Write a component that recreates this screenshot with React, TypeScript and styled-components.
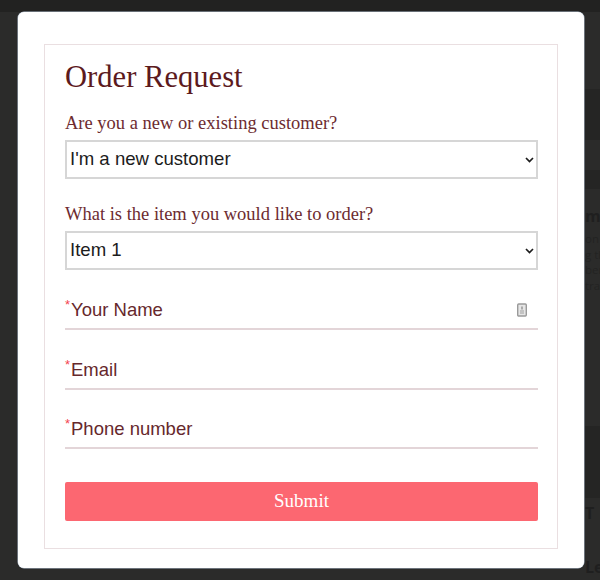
import React from 'react';
import styled, { createGlobalStyle } from 'styled-components';

const GlobalStyle = createGlobalStyle`
  html, body {
    margin: 0;
    padding: 0;
    height: 100%;
    background: #2b2b2a;
    overflow: hidden;
  }
`;

const Backdrop = styled.div`
  position: relative;
  width: 600px;
  height: 580px;
  overflow: hidden;
  background: #2b2b2a;
`;

const TopStrip = styled.div`
  height: 12px;
  background: #222221;
`;

// page content that shows through the overlay, right of the modal
const BehindColumn = styled.div`
  box-sizing: border-box;
  height: 561px;
  padding-left: 585px;
  white-space: nowrap;
  font-family: 'Open Sans', 'Liberation Sans', Arial, sans-serif;
`;

const BehindPicture = styled.div<{ $top: number; $height: number }>`
  margin-top: ${({ $top }) => $top}px;
  height: ${({ $height }) => $height}px;
  background: #252524;
`;

const BehindHeading = styled.div<{ $top: number }>`
  margin-top: ${({ $top }) => $top}px;
  font-size: 16px;
  font-weight: 700;
  line-height: 20px;
  color: #1f1f1f;
`;

const BehindBody = styled.div`
  margin-top: 5px;
  font-size: 11.5px;
  line-height: 15.5px;
  color: #232322;
`;

const BehindCaptions = styled.div`
  display: flex;
  gap: 163px;
  padding-left: 60px;
  font-family: 'Liberation Sans', Arial, sans-serif;
  font-size: 13px;
  font-weight: 700;
  color: #202020;
`;

const Modal = styled.div`
  position: absolute;
  top: 12px;
  left: 18px;
  box-sizing: border-box;
  width: 566px;
  height: 556px;
  padding: 32px 26px 19px;
  background: #fff;
  border-radius: 6px;
  box-shadow: 0 0 0 0.5px #aebccb;
`;

const Form = styled.form`
  box-sizing: border-box;
  height: 505px;
  padding: 14px 19px 0 20px;
  border: 1px solid #eadfe1;
  font-family: 'Liberation Serif', 'Times New Roman', serif;
`;

const Title = styled.h1`
  margin: 0 0 17px;
  font-size: 30.6px;
  font-weight: 400;
  line-height: 36px;
  color: #5c1a1d;
`;

const SelectGroup = styled.div`
  margin-bottom: 24px;

  & + & {
    margin-bottom: 19px;
  }
`;

const SelectLabel = styled.label`
  display: block;
  margin-bottom: 6px;
  font-size: 18.5px;
  line-height: 22px;
  color: #6d2b30;
`;

const SelectWrap = styled.div`
  position: relative;
`;

const Select = styled.select`
  display: block;
  box-sizing: border-box;
  width: 100%;
  height: 39px;
  padding: 0 24px 2px 3px;
  border: 2px solid #d6d6d6;
  border-radius: 0;
  appearance: none;
  background: #fff;
  font-family: 'Liberation Sans', Arial, sans-serif;
  font-size: 18.6px;
  color: #1c1c1c;
  outline: none;
`;

const Chevron = styled.svg`
  position: absolute;
  top: 17px;
  right: 4px;
  width: 9px;
  height: 6px;
  pointer-events: none;
`;

const Field = styled.div`
  display: flex;
  align-items: center;
  box-sizing: border-box;
  height: 41px;
  margin-bottom: 18.5px;
  padding-top: 3px;
  border-bottom: 2px solid #e3d5d8;
  font-family: 'Liberation Sans', Arial, sans-serif;
  font-size: 18.5px;
  color: #66282c;
`;

const Required = styled.span`
  align-self: flex-start;
  margin-top: 6px;
  width: 6px;
  font-size: 13px;
  line-height: 13px;
  color: #f4434f;
`;

const FieldName = styled.span`
  flex: 1;
`;

const SubmitButton = styled.button`
  display: block;
  width: 100%;
  height: 39px;
  margin-top: 33px;
  padding: 0 0 2px;
  border: 0;
  border-radius: 2px;
  background: #fc6771;
  font-family: 'Liberation Serif', 'Times New Roman', serif;
  font-size: 19px;
  color: #fff;
`;

const ContactIcon = styled.svg`
  width: 12px;
  height: 14px;
  margin-right: 10px;
`;

const SelectChevron = () => (
  <Chevron viewBox="0 0 9 6" fill="none">
    <path d="M1 1l3.5 3.5L8 1" stroke="#1c1c1c" strokeWidth="1.7" />
  </Chevron>
);

const AutofillIcon = () => (
  <ContactIcon viewBox="0 0 12 14" fill="none">
    <rect x="1.7" y="1" width="8.6" height="12" rx="1" fill="#e6e6e6" stroke="#9a9a9a" strokeWidth="1.4" />
    <path d="M6 3.4v3" stroke="#8a8a8a" strokeWidth="1.3" />
    <path d="M4 8h4M4 10h4" stroke="#a0a0a0" strokeWidth="1" />
  </ContactIcon>
);

const App: React.FC = () => {
  return (
    <Backdrop>
      <GlobalStyle />
      <TopStrip />
      <BehindColumn>
        <BehindPicture $top={77} $height={51} />
        <BehindPicture $top={30} $height={19} />
        <BehindHeading $top={17}>m T</BehindHeading>
        <BehindBody>
          on
          <br />
          g th
          <br />
          ber
          <br />
          tra
        </BehindBody>
        <BehindPicture $top={133} $height={72} />
        <BehindHeading $top={5}>T</BehindHeading>
        <BehindHeading $top={34}>Le</BehindHeading>
      </BehindColumn>
      <BehindCaptions>
        <span>Trivia Quiz</span>
        <span>Personality Quiz</span>
      </BehindCaptions>
      <Modal>
        <Form onSubmit={(e) => e.preventDefault()}>
          <Title>Order Request</Title>
          <SelectGroup>
            <SelectLabel htmlFor="customer">Are you a new or existing customer?</SelectLabel>
            <SelectWrap>
              <Select id="customer" defaultValue="new">
                <option value="new">I'm a new customer</option>
                <option value="existing">I'm an existing customer</option>
              </Select>
              <SelectChevron />
            </SelectWrap>
          </SelectGroup>
          <SelectGroup>
            <SelectLabel htmlFor="item">What is the item you would like to order?</SelectLabel>
            <SelectWrap>
              <Select id="item" defaultValue="1">
                <option value="1">Item 1</option>
                <option value="2">Item 2</option>
              </Select>
              <SelectChevron />
            </SelectWrap>
          </SelectGroup>
          <Field>
            <Required>*</Required>
            <FieldName>Your Name</FieldName>
            <AutofillIcon />
          </Field>
          <Field>
            <Required>*</Required>
            <FieldName>Email</FieldName>
          </Field>
          <Field>
            <Required>*</Required>
            <FieldName>Phone number</FieldName>
          </Field>
          <SubmitButton type="submit">Submit</SubmitButton>
        </Form>
      </Modal>
    </Backdrop>
  );
};

export default App;
